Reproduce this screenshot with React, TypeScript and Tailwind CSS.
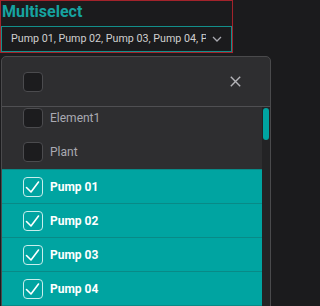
import React from "react";

const items = [
  { label: "Element1", checked: false },
  { label: "Plant", checked: false },
  { label: "Pump 01", checked: true },
  { label: "Pump 02", checked: true },
  { label: "Pump 03", checked: true },
  { label: "Pump 04", checked: true },
];

const Box = ({ checked }: { checked: boolean }) =>
  checked ? (
    <div className="w-[20px] h-[20px] rounded-[4px] border border-[#c8eeec] flex items-center justify-center shrink-0">
      <svg width="18" height="18" viewBox="0 0 18 18" fill="none">
        <path d="M2.5 9.5 L7 14 L14.5 4" stroke="#ffffff" strokeWidth="1.6" strokeLinecap="round" strokeLinejoin="round" />
      </svg>
    </div>
  ) : (
    <div className="w-[20px] h-[20px] rounded-[4px] border border-[#4b4b4e] bg-[#1c1c1e] shrink-0" />
  );

const App = () => {
  return (
    <div className="h-[306px] overflow-hidden bg-[#1b1b1d] font-['Roboto','Liberation_Sans',sans-serif]">
      <div className="w-[233px] h-[53px] border border-[#a3232b] flex flex-col">
        <div className="h-[25px] pl-[1px] pt-[2px] text-[16px] leading-[18px] font-bold text-[#16a3a0]">
          Multiselect
        </div>
        <div className="h-[26px] border border-[#138f8b] flex items-center pl-[9px] pr-[9px]">
          <div className="w-[195px] overflow-hidden whitespace-nowrap text-[10.7px] text-[#cfcfcf]">
            Pump 01, Pump 02, Pump 03, Pump 04, Pump 05
          </div>
          <svg className="ml-[6px]" width="10" height="6" viewBox="0 0 10 6" fill="none">
            <path d="M1 1 L5 5 L9 1" stroke="#a9a9b0" strokeWidth="1.3" />
          </svg>
        </div>
      </div>

      <div className="mt-[3px] ml-[1px] w-[270px] border border-[#4a4a4c] rounded-t-[5px] bg-[#2e2e30]">
        <div className="h-[50px] border-b border-[#4f4f52] flex items-center justify-between pl-[21px] pr-[29px]">
          <Box checked={false} />
          <svg width="11" height="11" viewBox="0 0 11 11" fill="none">
            <path d="M0.8 0.8 L10.2 10.2 M10.2 0.8 L0.8 10.2" stroke="#b4b4b8" strokeWidth="1.4" />
          </svg>
        </div>
        <div className="flex h-[260px]">
          <div className="flex-1 overflow-hidden">
            <div className="-mt-[6px]">
              {items.map((it) => (
                <div
                  key={it.label}
                  className={
                    it.checked
                      ? "h-[34px] flex items-center gap-[7px] pl-[21px] bg-[#00a4a1] border-t border-[#088a87]"
                      : "h-[34px] flex items-center gap-[7px] pl-[21px]"
                  }
                >
                  <Box checked={it.checked} />
                  <span
                    className={
                      it.checked
                        ? "text-[12px] font-bold text-white"
                        : "text-[12px] text-[#aaaab2]"
                    }
                  >
                    {it.label}
                  </span>
                </div>
              ))}
              <div className="h-[34px] bg-[#00a4a1] border-t border-[#088a87]" />
            </div>
          </div>
          <div className="w-[8px] bg-[#232325] pt-[1px] flex justify-center">
            <div className="w-[6px] h-[32px] rounded-full bg-[#00a4a1]" />
          </div>
        </div>
      </div>
    </div>
  );
};

export default App;
